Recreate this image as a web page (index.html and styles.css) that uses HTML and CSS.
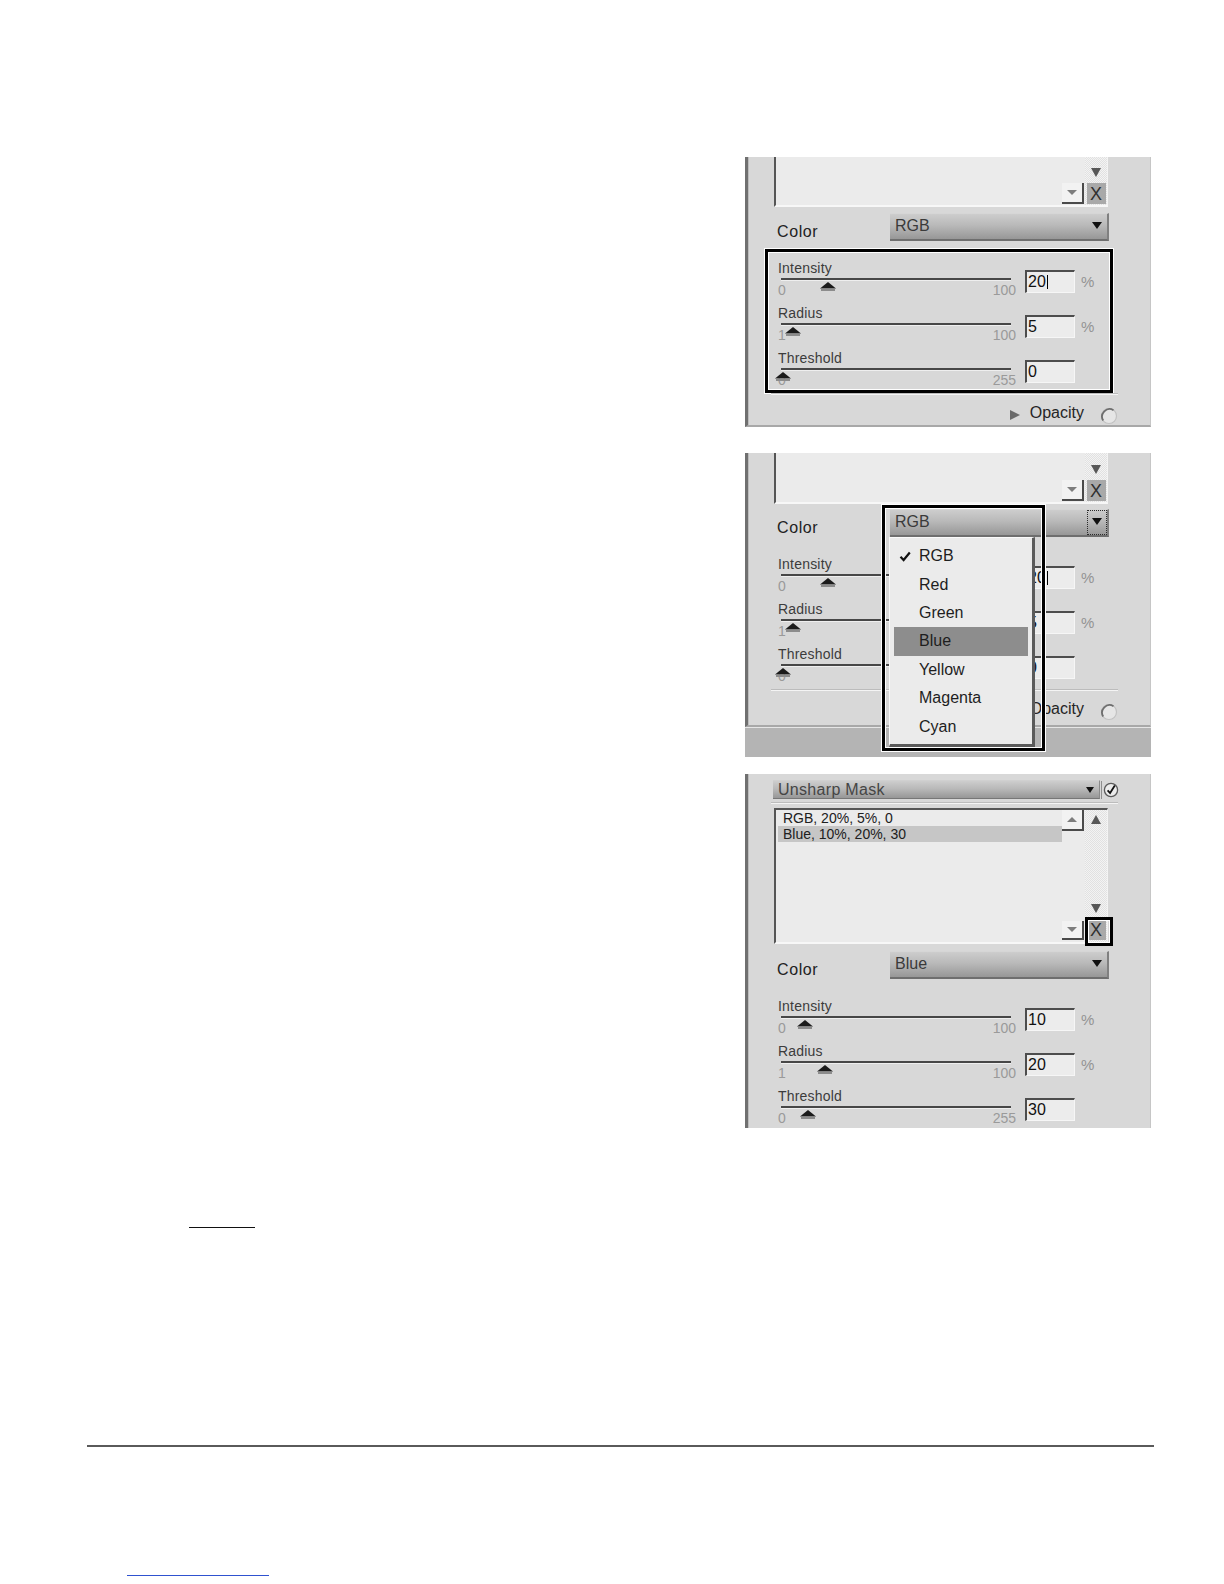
FILE: index.html
```html
<!DOCTYPE html>
<html>
<head>
<meta charset="utf-8">
<title>Unsharp Mask</title>
<link rel="stylesheet" href="styles.css">
</head>
<body>
<div class="page">
  <div class="shots">

    <!-- Panel 1 -->
    <section class="panel p1">
      <div class="listbox lb-short">
        <div class="lb-items"></div>
        <div class="lb-btns"><span class="mini-btn"><i class="mini-tri down"></i></span></div>
        <div class="lb-scroll"><i class="tri-down"></i><span class="xbtn">X</span></div>
      </div>
      <div class="color-row">
        <span class="color-label">Color</span>
        <div class="combo"><span class="combo-text">RGB</span><span class="combo-btn"><i class="combo-arrow"></i></span></div>
      </div>
      <div class="controls boxed">
        <div class="ctl">
          <div class="slider">
            <div class="ctl-label">Intensity</div>
            <div class="track"></div>
            <div class="scale"><span>0</span><span>100</span><svg class="thumb" style="left:42px" viewBox="0 0 16 9"><polygon points="8,0 16,6.5 0,6.5" fill="#1b1b1b"/><rect x="1" y="6.5" width="14" height="2.5" fill="#8c8c8c"/></svg></div>
          </div>
          <div class="field">20<span class="caret"></span></div>
          <div class="unit">%</div>
        </div>
        <div class="ctl">
          <div class="slider">
            <div class="ctl-label">Radius</div>
            <div class="track"></div>
            <div class="scale"><span>1</span><span>100</span><svg class="thumb" style="left:7px" viewBox="0 0 16 9"><polygon points="8,0 16,6.5 0,6.5" fill="#1b1b1b"/><rect x="1" y="6.5" width="14" height="2.5" fill="#8c8c8c"/></svg></div>
          </div>
          <div class="field">5</div>
          <div class="unit">%</div>
        </div>
        <div class="ctl">
          <div class="slider">
            <div class="ctl-label">Threshold</div>
            <div class="track"></div>
            <div class="scale"><span>0</span><span>255</span><svg class="thumb" style="left:-3px" viewBox="0 0 16 9"><polygon points="8,0 16,6.5 0,6.5" fill="#1b1b1b"/><rect x="1" y="6.5" width="14" height="2.5" fill="#8c8c8c"/></svg></div>
          </div>
          <div class="field">0</div>
          <div class="unit"></div>
        </div>
      </div>
      <div class="sep"></div>
      <div class="opacity-row">
        <i class="tri-right"></i>
        <span class="opacity-text">Opacity</span>
        <svg class="radio" viewBox="0 0 18 18"><circle cx="9" cy="9" r="7.5" fill="#e6e6e6" stroke="#c2c2c2" stroke-width="1.2"/><path d="M3.2 13.5 A7.5 7.5 0 0 1 13.5 3.2" fill="none" stroke="#6e6e6e" stroke-width="1.8"/></svg>
      </div>
    </section>

    <!-- Panel 2 -->
    <div class="shot2">
      <section class="panel p2">
        <div class="listbox lb-short2">
          <div class="lb-items"></div>
          <div class="lb-btns"><span class="mini-btn"><i class="mini-tri down"></i></span></div>
          <div class="lb-scroll"><i class="tri-down"></i><span class="xbtn">X</span></div>
        </div>
        <div class="color-row cr2">
          <span class="color-label">Color</span>
          <div class="combo"><span class="combo-text">RGB</span><span class="combo-btn focus"><i class="combo-arrow"></i></span></div>
        </div>
        <div class="controls">
          <div class="ctl">
            <div class="slider">
              <div class="ctl-label">Intensity</div>
              <div class="track"></div>
              <div class="scale"><span>0</span><span>100</span><svg class="thumb" style="left:42px" viewBox="0 0 16 9"><polygon points="8,0 16,6.5 0,6.5" fill="#1b1b1b"/><rect x="1" y="6.5" width="14" height="2.5" fill="#8c8c8c"/></svg></div>
            </div>
            <div class="field">20<span class="caret"></span></div>
            <div class="unit">%</div>
          </div>
          <div class="ctl">
            <div class="slider">
              <div class="ctl-label">Radius</div>
              <div class="track"></div>
              <div class="scale"><span>1</span><span>100</span><svg class="thumb" style="left:7px" viewBox="0 0 16 9"><polygon points="8,0 16,6.5 0,6.5" fill="#1b1b1b"/><rect x="1" y="6.5" width="14" height="2.5" fill="#8c8c8c"/></svg></div>
            </div>
            <div class="field">5</div>
            <div class="unit">%</div>
          </div>
          <div class="ctl">
            <div class="slider">
              <div class="ctl-label">Threshold</div>
              <div class="track"></div>
              <div class="scale"><span>0</span><span>255</span><svg class="thumb" style="left:-3px" viewBox="0 0 16 9"><polygon points="8,0 16,6.5 0,6.5" fill="#1b1b1b"/><rect x="1" y="6.5" width="14" height="2.5" fill="#8c8c8c"/></svg></div>
            </div>
            <div class="field">0</div>
            <div class="unit"></div>
          </div>
        </div>
        <div class="sep"></div>
        <div class="opacity-row or2">
          <i class="tri-right"></i>
          <span class="opacity-text">Opacity</span>
          <svg class="radio" viewBox="0 0 18 18"><circle cx="9" cy="9" r="7.5" fill="#e6e6e6" stroke="#c2c2c2" stroke-width="1.2"/><path d="M3.2 13.5 A7.5 7.5 0 0 1 13.5 3.2" fill="none" stroke="#6e6e6e" stroke-width="1.8"/></svg>
        </div>
      </section>
      <div class="band"></div>

      <div class="menu">
        <div class="menu-item"><svg class="check" viewBox="0 0 12 11"><path d="M1.5 5.8 L4.6 9 L10.8 1.5" fill="none" stroke="#111" stroke-width="2.2"/></svg><span>RGB</span></div>
        <div class="menu-item"><span>Red</span></div>
        <div class="menu-item"><span>Green</span></div>
        <div class="menu-item selected"><span>Blue</span></div>
        <div class="menu-item"><span>Yellow</span></div>
        <div class="menu-item"><span>Magenta</span></div>
        <div class="menu-item"><span>Cyan</span></div>
      </div>
      <div class="popup-frame"></div>
    </div>

    <!-- Panel 3 -->
    <section class="panel p3">
      <div class="header-row">
        <div class="combo combo-filter"><span class="combo-text">Unsharp Mask</span><i class="combo-arrow"></i></div>
        <span class="vsep"></span>
        <svg class="check-circle" viewBox="0 0 16 16"><circle cx="8" cy="8" r="6.6" fill="#ececec" stroke="#5a5a5a" stroke-width="1.3"/><path d="M4.6 8.3 L7.1 11 L11.8 3.6" fill="none" stroke="#111" stroke-width="1.8"/></svg>
      </div>
      <div class="sep sep-top"></div>
      <div class="listbox lb-full">
        <div class="lb-items">
          <div class="lb-item">RGB, 20%, 5%, 0</div>
          <div class="lb-item selected">Blue, 10%, 20%, 30</div>
        </div>
        <div class="lb-btns lb-btns-full">
          <span class="mini-btn"><i class="mini-tri up"></i></span>
          <span class="mini-btn mini-low"><i class="mini-tri down"></i></span>
        </div>
        <div class="lb-scroll lb-scroll-full"><i class="tri-up"></i><span class="grow"></span><i class="tri-down"></i><span class="xbtn">X</span></div>
      </div>
      <div class="x-frame"></div>
      <div class="color-row cr3">
        <span class="color-label">Color</span>
        <div class="combo"><span class="combo-text">Blue</span><span class="combo-btn"><i class="combo-arrow"></i></span></div>
      </div>
      <div class="controls">
        <div class="ctl">
          <div class="slider">
            <div class="ctl-label">Intensity</div>
            <div class="track"></div>
            <div class="scale"><span>0</span><span>100</span><svg class="thumb" style="left:19px" viewBox="0 0 16 9"><polygon points="8,0 16,6.5 0,6.5" fill="#1b1b1b"/><rect x="1" y="6.5" width="14" height="2.5" fill="#8c8c8c"/></svg></div>
          </div>
          <div class="field">10</div>
          <div class="unit">%</div>
        </div>
        <div class="ctl">
          <div class="slider">
            <div class="ctl-label">Radius</div>
            <div class="track"></div>
            <div class="scale"><span>1</span><span>100</span><svg class="thumb" style="left:39px" viewBox="0 0 16 9"><polygon points="8,0 16,6.5 0,6.5" fill="#1b1b1b"/><rect x="1" y="6.5" width="14" height="2.5" fill="#8c8c8c"/></svg></div>
          </div>
          <div class="field">20</div>
          <div class="unit">%</div>
        </div>
        <div class="ctl">
          <div class="slider">
            <div class="ctl-label">Threshold</div>
            <div class="track"></div>
            <div class="scale"><span>0</span><span>255</span><svg class="thumb" style="left:22px" viewBox="0 0 16 9"><polygon points="8,0 16,6.5 0,6.5" fill="#1b1b1b"/><rect x="1" y="6.5" width="14" height="2.5" fill="#8c8c8c"/></svg></div>
          </div>
          <div class="field">30</div>
          <div class="unit"></div>
        </div>
      </div>
    </section>
  </div>

  <div class="note-rule"></div>
  <div class="page-rule"></div>
  <div class="link-rule"></div>
</div>
</body>
</html>
```

FILE: styles.css
```css
* { box-sizing: border-box; }

body {
  margin: 0;
  background: #ffffff;
  font-family: "Liberation Sans", Arial, sans-serif;
  color: #222;
}

.page {
  width: 1224px;
  height: 1584px;
  padding-top: 157px;
  overflow: hidden;
}

.shots {
  margin-left: 745px;
  width: 406px;
  display: flex;
  flex-direction: column;
}

/* ---------- panel frame ---------- */
.panel {
  position: relative;
  flex: none;
  display: flex;
  flex-direction: column;
  background: #d8d8d8;
  border-left: 3px solid #707070;
  border-right: 1px solid #c6c6c6;
  box-shadow: inset 1px 0 0 #bdbdbd;
  overflow: hidden;
}

.panel > * { flex: none; }

.p1 {
  height: 270px;
  border-bottom: 2px solid #a8a8a8;
}

.shot2 {
  position: relative;
  flex: none;
  margin-top: 26px;
  display: flex;
  flex-direction: column;
}

.p2 {
  height: 274px;
  border-bottom: 2px solid #a8a8a8;
}

.band {
  flex: none;
  height: 30px;
  background: #b4b4b4;
  border-top: 1px solid #e6e6e6;
}

.p3 {
  height: 354px;
  margin-top: 17px;
}

/* ---------- list box ---------- */
.listbox {
  margin-left: 26px;
  width: 334px;
  display: grid;
  grid-template-columns: 1fr 23px 22px;
  background: #ebebeb;
  border-left: 2px solid #555;
  border-right: 1px solid #f3f3f3;
  border-bottom: 2px solid #f7f7f7;
}

.lb-short { height: 50px; }
.lb-short2 { height: 51px; }

.lb-full {
  height: 136px;
  margin-top: 4px;
  border-top: 2px solid #555;
}

.lb-items {
  display: flex;
  flex-direction: column;
  padding-left: 2px;
}

.lb-item {
  height: 16px;
  line-height: 16px;
  font-size: 14px;
  padding-left: 5px;
  color: #202020;
}

.lb-item.selected { background: #c6c6c6; }

.lb-btns {
  display: flex;
  flex-direction: column;
  justify-content: flex-end;
  padding-bottom: 1px;
}

.lb-btns-full {
  justify-content: space-between;
  padding-bottom: 2px;
}

.mini-btn {
  flex: none;
  width: 22px;
  height: 21px;
  background: #f2f2f2;
  border-right: 2px solid #4a4a4a;
  border-bottom: 2px solid #4a4a4a;
  display: flex;
  align-items: center;
  justify-content: center;
}

.mini-low { height: 19px; }

.mini-tri {
  width: 0;
  height: 0;
  border-left: 5px solid transparent;
  border-right: 5px solid transparent;
}

.mini-tri.down { border-top: 5px solid #7d7d7d; }
.mini-tri.up { border-bottom: 5px solid #7d7d7d; }

.lb-scroll {
  display: flex;
  flex-direction: column;
  align-items: center;
  justify-content: flex-end;
  padding-bottom: 1px;
  background: repeating-conic-gradient(#e1e1e1 0 25%, #f3f3f3 0 50%) 0 0 / 2px 2px;
}

.lb-scroll-full {
  justify-content: flex-start;
  padding-top: 5px;
  padding-bottom: 2px;
}

.grow { flex: 1; }

.tri-down {
  flex: none;
  width: 0;
  height: 0;
  border-left: 5px solid transparent;
  border-right: 5px solid transparent;
  border-top: 9px solid #575757;
  margin-bottom: 6px;
}

.tri-up {
  flex: none;
  width: 0;
  height: 0;
  border-left: 5px solid transparent;
  border-right: 5px solid transparent;
  border-bottom: 9px solid #575757;
}

.xbtn {
  flex: none;
  width: 19px;
  height: 21px;
  background: #a9a9a9;
  color: #303030;
  font-size: 18px;
  line-height: 22px;
  text-align: center;
}

/* ---------- color row ---------- */
.color-row {
  margin-top: 6px;
  margin-left: 29px;
  display: flex;
  align-items: flex-end;
}

.cr2 { margin-top: 5px; }
.cr3 { margin-top: 7px; }

.color-label {
  width: 113px;
  font-size: 16px;
  line-height: 18px;
  letter-spacing: 0.6px;
  color: #222;
}

.combo {
  width: 219px;
  height: 28px;
  display: flex;
  align-items: flex-start;
  justify-content: space-between;
  background: linear-gradient(to bottom, #cdcdcd 0%, #b9b9b9 45%, #979797 100%);
  border-top: 1px solid #d6d6d6;
  border-right: 2px solid #808080;
  border-bottom: 2px solid #6e6e6e;
}

.combo-text {
  padding-left: 5px;
  padding-top: 3px;
  font-size: 16px;
  line-height: 18px;
  color: #3a3a3a;
}

.combo-btn {
  width: 20px;
  height: 25px;
  display: flex;
  align-items: center;
  justify-content: center;
  padding-bottom: 3px;
}

.combo-btn.focus {
  outline: 1px dotted #2a2a2a;
  outline-offset: -1px;
}

.combo-arrow {
  width: 0;
  height: 0;
  border-left: 5px solid transparent;
  border-right: 5px solid transparent;
  border-top: 7px solid #111;
}

/* ---------- header (panel 3) ---------- */
.header-row {
  margin-top: 6px;
  margin-left: 25px;
  display: flex;
  align-items: center;
}

.combo-filter {
  width: 327px;
  height: 19px;
  align-items: center;
  padding-right: 5px;
  border-top: 1px solid #d0d0d0;
  border-bottom: 1px solid #777;
  border-right: 1px solid #8a8a8a;
}

.combo-filter .combo-text {
  padding-top: 0;
  font-size: 16px;
  line-height: 17px;
  letter-spacing: 0.3px;
  color: #454545;
}

.combo-filter .combo-arrow {
  border-left-width: 4px;
  border-right-width: 4px;
  border-top-width: 6px;
}

.vsep {
  width: 1px;
  height: 18px;
  background: #8e8e8e;
  margin-left: 1px;
}

.check-circle {
  width: 16px;
  height: 16px;
  margin-left: 1px;
}

/* ---------- controls ---------- */
.controls {
  margin-top: 8px;
  margin-left: 17px;
  width: 348px;
  height: 144px;
  padding: 8px 0 4px 10px;
  border: 3px solid transparent;
  display: flex;
  flex-direction: column;
  gap: 9px;
}

.controls.boxed {
  border-color: #000;
  box-shadow: inset 0 0 0 1px #fff, 0 0 0 1px #fff;
}

.ctl {
  height: 36px;
  flex: none;
  display: grid;
  grid-template-columns: 247px 50px 1fr;
}

.slider {
  padding-right: 9px;
  display: flex;
  flex-direction: column;
}

.ctl-label {
  font-size: 14px;
  line-height: 16px;
  letter-spacing: 0.2px;
  color: #3c3c3c;
}

.track {
  margin-top: 2px;
  margin-left: 3px;
  width: 230px;
  height: 2px;
  background: #474747;
  box-shadow: 0 1px 0 #efefef;
}

.scale {
  position: relative;
  margin-top: 3px;
  height: 14px;
  display: flex;
  justify-content: space-between;
  font-size: 14px;
  line-height: 14px;
  color: #9a9a9a;
}

.thumb {
  position: absolute;
  top: -1px;
  width: 16px;
  height: 9px;
}

.field {
  margin-top: 10px;
  height: 23px;
  background: #ececec;
  border-top: 2px solid #4d4d4d;
  border-left: 2px solid #4d4d4d;
  border-right: 1px solid #f6f6f6;
  border-bottom: 1px solid #f6f6f6;
  padding-left: 1px;
  font-size: 16px;
  line-height: 20px;
  color: #111;
  display: flex;
  align-items: center;
}

.caret {
  display: inline-block;
  width: 1px;
  height: 14px;
  background: #000;
  margin-left: 1px;
}

.unit {
  padding-left: 6px;
  margin-top: 14px;
  font-size: 15px;
  line-height: 16px;
  color: #939393;
}

/* ---------- separator & opacity ---------- */
.sep {
  margin-left: 23px;
  width: 347px;
  height: 2px;
  border-top: 1px solid #bcbcbc;
  border-bottom: 1px solid #f4f4f4;
}

.sep-top { margin-top: 3px; }

.opacity-row {
  height: 30px;
  display: flex;
  justify-content: flex-end;
  align-items: flex-start;
  padding-right: 32px;
}

.or2 { height: 34px; }

.tri-right {
  margin-top: 15px;
  width: 0;
  height: 0;
  border-top: 5px solid transparent;
  border-bottom: 5px solid transparent;
  border-left: 10px solid #6a6a6a;
}

.opacity-text {
  margin-top: 9px;
  margin-left: 10px;
  font-size: 16px;
  line-height: 18px;
  color: #252525;
}

.radio {
  margin-top: 12px;
  margin-left: 16px;
  width: 18px;
  height: 18px;
}

/* ---------- popup menu (panel 2 overlay) ---------- */
.popup-frame {
  position: absolute;
  left: 137px;
  top: 52px;
  width: 163px;
  height: 246px;
  border: 3px solid #000;
  box-shadow: inset 0 0 0 1px #fff, 0 0 0 1px #fff;
}

.menu {
  position: absolute;
  left: 144px;
  top: 84px;
  width: 146px;
  height: 210px;
  padding: 4px 4px 0 4px;
  background: #ebebeb;
  border-top: 1px solid #fafafa;
  border-left: 1px solid #fafafa;
  border-right: 3px solid #5a5a5a;
  border-bottom: 3px solid #5a5a5a;
  display: flex;
  flex-direction: column;
}

.menu-item {
  height: 28.4px;
  flex: none;
  display: flex;
  align-items: center;
  padding-left: 25px;
  position: relative;
  font-size: 16px;
  color: #1e1e1e;
}

.menu-item.selected { background: #8d8d8d; }

.check {
  position: absolute;
  left: 5px;
  top: 9px;
  width: 12px;
  height: 11px;
}

/* ---------- X highlight (panel 3 overlay) ---------- */
.x-frame {
  position: absolute;
  left: 337px;
  top: 143px;
  width: 28px;
  height: 29px;
  border: 3px solid #000;
  box-shadow: inset 0 0 0 1px #fff;
}

/* ---------- page rules ---------- */
.note-rule {
  margin-top: 99px;
  margin-left: 189px;
  width: 66px;
  height: 1px;
  background: #111;
}

.page-rule {
  margin-top: 217px;
  margin-left: 87px;
  width: 1067px;
  height: 2px;
  background: #5a5a5a;
}

.link-rule {
  margin-top: 128px;
  margin-left: 127px;
  width: 142px;
  height: 1px;
  background: #2f52d0;
}
```
